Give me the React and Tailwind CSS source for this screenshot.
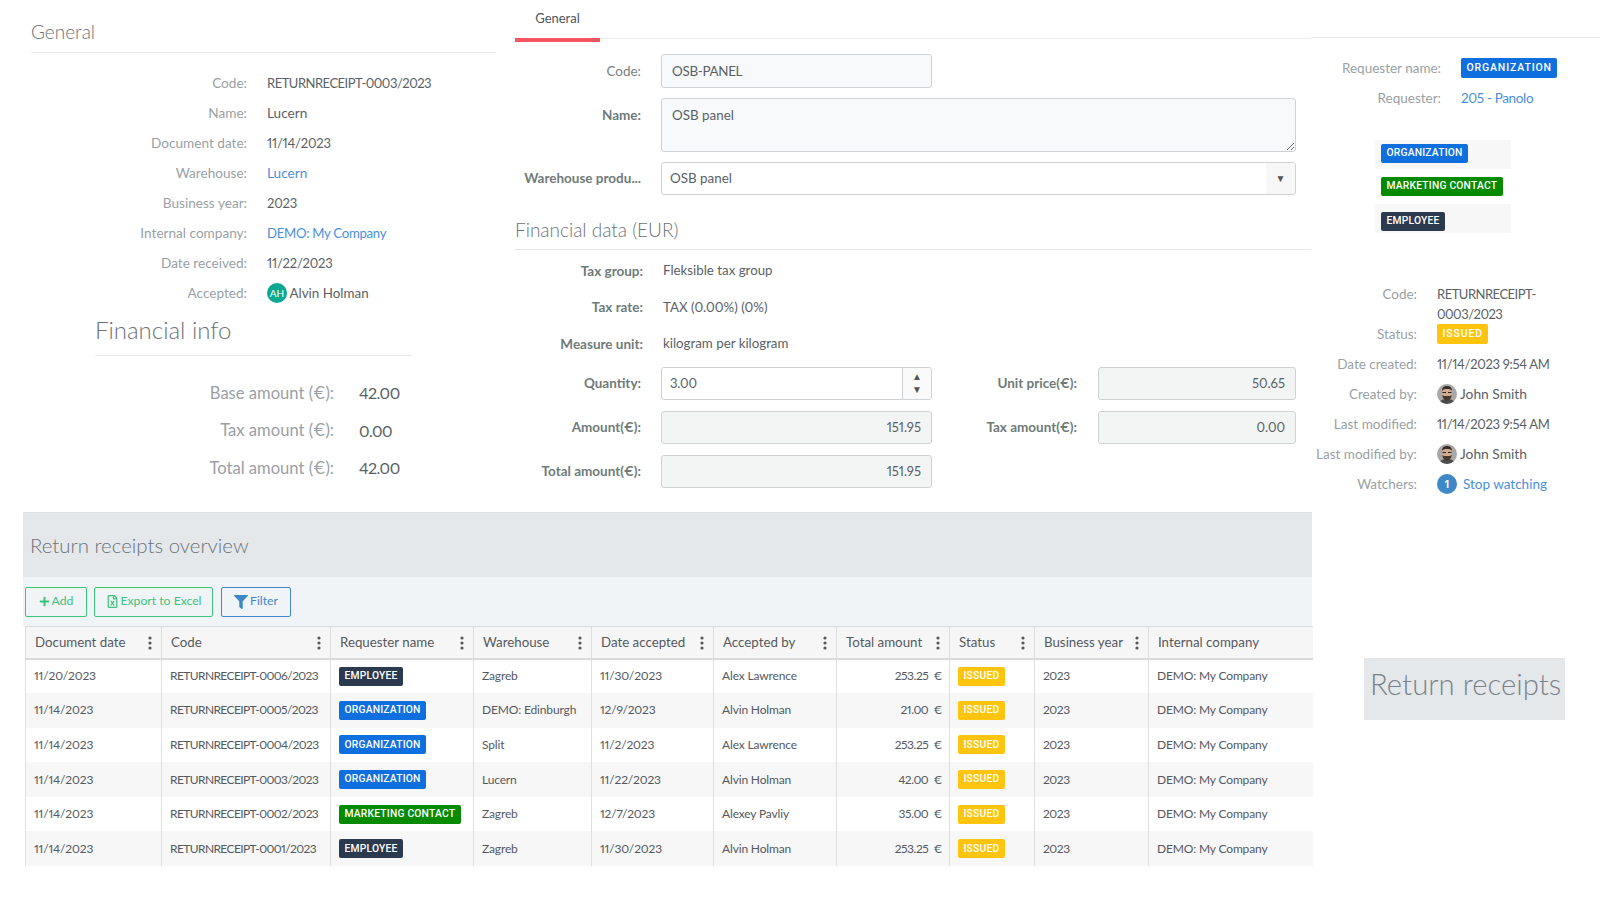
import React from 'react';
import { FaPlus, FaRegFileExcel, FaFilter } from 'react-icons/fa';

const N = 'text-[13px] tracking-[-0.2px]';
const D = 'text-[13px] tracking-[-0.3px]';
const C = 'text-[13px] tracking-[-0.5px]';

const Badge = ({ kind, big }) => {
  const map = {
    ORGANIZATION: 'bg-[#0f6fdf]',
    'MARKETING CONTACT': 'bg-[#058a00]',
    EMPLOYEE: 'bg-[#2b3a4e]',
    ISSUED: 'bg-[#ffc40d]',
  };
  return (
    <span className={`inline-flex items-center justify-center whitespace-nowrap rounded-[2px] px-[5.5px] font-['Roboto',sans-serif] font-medium text-white leading-none ${map[kind]} ${big ? 'h-[20px] text-[10.5px] tracking-[0.85px]' : 'h-[19px] text-[10.300px] tracking-[0.2px]'}`}>
      {kind}
    </span>
  );
};

const Face = () => (
  <svg viewBox="0 0 20 20" className="w-[20px] h-[20px] shrink-0 rounded-full">
    <rect width="20" height="20" fill="#a8a8a8" />
    <path d="M2 20c1-4 4-5 8-5s7 1 8 5z" fill="#4c4c4c" />
    <ellipse cx="10" cy="9.5" rx="5" ry="6" fill="#d0ab92" />
    <path d="M5 7c0-4 2.500-5 5-5s5 1 5 5c-1-1.500-2-2-5-2s-4 .5-5 2z" fill="#3a2d26" />
    <path d="M5.200 11c.5 3 2 5.500 4.800 5.500s4.300-2.500 4.800-5.500c-1 1-2.500 1-4.800 1s-3.800 0-4.800-1z" fill="#4a372c" />
    <path d="M5.500 8.500h3.500M11 8.500h3.500" stroke="#222" strokeWidth="1.100" />
  </svg>
);

const InfoRow = ({ label, children, labelW, h = 'h-[30px]' }) => (
  <div className={`flex items-center ${h}`}>
    <div className={`${labelW} text-right text-[#9a9fa5] shrink-0`}>{label}</div>
    <div className="text-[#5a5f66] ml-[20px] flex items-center">{children}</div>
  </div>
);

const link = 'text-[#4a8fdc]';

const Left = () => (
  <div className="w-[484px] ml-[31px] text-[13.600px] shrink-0">
    <div className="w-[465px] border-b border-[#e5e7e9] pt-[20px] pb-[8px] text-[19px] leading-[24px] font-light text-[#6b7278]">General</div>
    <div className="mt-[15.500px]">
      <InfoRow labelW="w-[216px]" label="Code:"><span className={C}>RETURNRECEIPT-0003/2023</span></InfoRow>
      <InfoRow labelW="w-[216px]" label="Name:">Lucern</InfoRow>
      <InfoRow labelW="w-[216px]" label="Document date:"><span className={N}>11/14/2023</span></InfoRow>
      <InfoRow labelW="w-[216px]" label="Warehouse:"><span className={link}>Lucern</span></InfoRow>
      <InfoRow labelW="w-[216px]" label="Business year:"><span className={N}>2023</span></InfoRow>
      <InfoRow labelW="w-[216px]" label="Internal company:"><span className={`${link} text-[13.200px] tracking-[-0.3px]`}>DEMO: My Company</span></InfoRow>
      <InfoRow labelW="w-[216px]" label="Date received:"><span className={N}>11/22/2023</span></InfoRow>
      <InfoRow labelW="w-[216px]" label="Accepted:">
        <span className="w-[20px] h-[20px] rounded-full bg-[#0aa98f] text-white text-[10px] flex items-center justify-center mr-[2.500px]">AH</span>
        <span className="text-[13.400px]">Alvin Holman</span>
      </InfoRow>
    </div>
    <div className="ml-[64px] w-[317px] mt-[5px] border-b border-[#e5e7e9] pb-[9px] text-[24px] leading-[32px] font-light text-[#6b7278]">Financial info</div>
    <div className="ml-[64px] mt-[19px] text-[16.600px]">
      {[['Base amount (€):', '42.00'], ['Tax amount (€):', '0.00'], ['Total amount (€):', '42.00']].map(([l, v]) => (
        <div key={l} className="flex items-center h-[37.500px]">
          <div className="w-[239px] text-right text-[#9a9fa5]">{l}</div>
          <div className="ml-[25px] text-[#5a5f66] text-[16px] tracking-[-0.5px]">{v}</div>
        </div>
      ))}
    </div>
  </div>
);

const Lbl = ({ children, w = 'w-[126px]' }) => (
  <div className={`${w} shrink-0 text-right font-bold text-[#6f7b79] truncate`}>{children}</div>
);

const inputBase = 'border border-[#cfd2d4] rounded-[3px] text-[#5a5f66] text-[13.400px] outline-none';

const ReadOnly = ({ value, w = 'w-[271px]' }) => (
  <input readOnly value={value} className={`${inputBase} ${w} h-[33.500px] bg-[#f3f5f5] text-right pr-[10px] text-[13px] tracking-[0px]`} />
);

const Middle = () => (
  <div className="w-[796px] text-[13.500px] shrink-0">
    <div className="h-[39px] border-b border-[#eceef0]">
      <div className="w-[85px] h-[42px] border-b-[4px] border-[#f4555f] text-center pt-[8px] leading-[20px] text-[13px] text-[#4f5459]">General</div>
    </div>
    <div className="mt-[15px] flex items-center gap-[20px]">
      <Lbl><span className="font-normal text-[#7a8280]">Code:</span></Lbl>
      <input readOnly value="OSB-PANEL" className={`${inputBase} w-[271px] h-[33.500px] bg-[#f8f9fb] px-[10px] tracking-[-0.3px]`} />
    </div>
    <div className="mt-[10px] flex gap-[20px]">
      <Lbl><span className="block mt-[7px]">Name:</span></Lbl>
      <textarea readOnly defaultValue="OSB panel" className={`${inputBase} w-[635px] h-[54px] bg-[#f8f9fb] px-[10px] py-[6px] block`} />
    </div>
    <div className="mt-[10px] flex items-center gap-[20px]">
      <Lbl>Warehouse produ...</Lbl>
      <div className={`${inputBase} w-[635px] h-[33px] flex items-center bg-white overflow-hidden`}>
        <span className="flex-1 pl-[8px]">OSB panel</span>
        <span className="w-[29px] h-full bg-[#f7f7f7] flex items-center justify-center text-[10px] text-[#555]">▼</span>
      </div>
    </div>
    <div className="mt-[23px] border-b border-[#e5e7e9] pb-[7px] text-[19px] leading-[24px] font-light text-[#6b7278]">Financial data (EUR)</div>
    <div className="mt-[3px]">
      {[['Tax group:', 'Fleksible tax group'], ['Tax rate:', 'TAX (0.00%) (0%)'], ['Measure unit:', 'kilogram per kilogram']].map(([l, v]) => (
        <div key={l} className="flex items-center h-[36.700px] gap-[20px]">
          <Lbl w="w-[128px]">{l}</Lbl>
          <span className="text-[#5a5f66] text-[13.300px]">{v}</span>
        </div>
      ))}
    </div>
    <div className="mt-[4px] flex flex-col gap-[10.500px]">
      <div className="flex items-center">
        <Lbl>Quantity:</Lbl>
        <div className={`${inputBase} ml-[20px] w-[271px] h-[33px] flex items-center bg-white overflow-hidden`}>
          <span className={`flex-1 pl-[8px] ${N}`}>3.00</span>
          <span className="w-[29px] h-full border-l border-[#cfd2d4] bg-[#fafafa] flex flex-col items-center justify-center text-[10px] leading-[13px] text-[#555]">
            <span>▲</span><span>▼</span>
          </span>
        </div>
        <Lbl w="w-[145px]">Unit price(€):</Lbl>
        <div className="ml-[21px]"><ReadOnly value="50.65" w="w-[198px]" /></div>
      </div>
      <div className="flex items-center">
        <Lbl>Amount(€):</Lbl>
        <div className="ml-[20px]"><ReadOnly value="151.95" /></div>
        <Lbl w="w-[145px]">Tax amount(€):</Lbl>
        <div className="ml-[21px]"><ReadOnly value="0.00" w="w-[198px]" /></div>
      </div>
      <div className="flex items-center">
        <Lbl>Total amount(€):</Lbl>
        <div className="ml-[20px]"><ReadOnly value="151.95" /></div>
      </div>
    </div>
  </div>
);

const Side = ({ label, children, cls = 'mb-[10px]' }) => (
  <div className={`flex ${cls}`}>
    <div className="w-[106px] text-right text-[#9a9fa5] leading-[20px] shrink-0 whitespace-nowrap">{label}</div>
    <div className="ml-[20px] text-[#5a5f66] leading-[20px] flex items-center">{children}</div>
  </div>
);

const Right = () => (
  <div className="flex-1 mt-[37px] border-t border-[#e5e7e9] text-[13.500px]">
    <div className="pt-[15px]">
      <InfoRow labelW="w-[130px]" label="Requester name:"><Badge kind="ORGANIZATION" big /></InfoRow>
      <InfoRow labelW="w-[130px]" label="Requester:"><span className={`${link} tracking-[-0.35px]`}>205 - Panolo</span></InfoRow>
    </div>
    <div className="ml-[64px] w-[136px] mt-[27px]">
      <div className="h-[29px] bg-[#f7f7f7] pl-[6px] pt-[4px] flex items-start"><Badge kind="ORGANIZATION" /></div>
      <div className="h-[35px] pl-[6px] flex items-center"><Badge kind="MARKETING CONTACT" /></div>
      <div className="h-[29px] bg-[#f7f7f7] pl-[6px] pt-[8px] flex items-start"><Badge kind="EMPLOYEE" /></div>
    </div>
    <div className="mt-[51px]">
      <Side label="Code:" cls="mb-0"><span className={C}>RETURNRECEIPT-<br />0003/2023</span></Side>
      <Side label="Status:"><Badge kind="ISSUED" big /></Side>
      <Side label="Date created:"><span className={D}>11/14/2023 9:54 AM</span></Side>
      <Side label="Created by:"><Face /><span className="ml-[3px] text-[13.800px]">John Smith</span></Side>
      <Side label="Last modified:"><span className={D}>11/14/2023 9:54 AM</span></Side>
      <Side label="Last modified by:"><Face /><span className="ml-[3px] text-[13.800px]">John Smith</span></Side>
      <Side label="Watchers:">
        <span className="w-[20px] h-[20px] rounded-full bg-[#3f88c8] text-white text-[12px] font-bold flex items-center justify-center mr-[6px]">1</span>
        <span className={link}>Stop watching</span>
      </Side>
    </div>
  </div>
);

const Kebab = () => (
  <svg viewBox="0 0 4 14" className="w-[4px] h-[14px] shrink-0 mr-[9px]" fill="#55595e">
    <circle cx="2" cy="2" r="1.600" /><circle cx="2" cy="7" r="1.600" /><circle cx="2" cy="12" r="1.600" />
  </svg>
);

const cols = [
  ['Document date', 'w-[136px]'], ['Code', 'w-[169px]'], ['Requester name', 'w-[143px]'], ['Warehouse', 'w-[118px]'], ['Date accepted', 'w-[122px]'],
  ['Accepted by', 'w-[123px]'], ['Total amount', 'w-[113px]'], ['Status', 'w-[85px]'], ['Business year', 'w-[114px]'], ['Internal company', 'w-[164px]'],
];

const rows = [
  ['11/20/2023', 'RETURNRECEIPT-0006/2023', 'EMPLOYEE', 'Zagreb', '11/30/2023', 'Alex Lawrence', '253.25'],
  ['11/14/2023', 'RETURNRECEIPT-0005/2023', 'ORGANIZATION', 'DEMO: Edinburgh', '12/9/2023', 'Alvin Holman', '21.00'],
  ['11/14/2023', 'RETURNRECEIPT-0004/2023', 'ORGANIZATION', 'Split', '11/2/2023', 'Alex Lawrence', '253.25'],
  ['11/14/2023', 'RETURNRECEIPT-0003/2023', 'ORGANIZATION', 'Lucern', '11/22/2023', 'Alvin Holman', '42.00'],
  ['11/14/2023', 'RETURNRECEIPT-0002/2023', 'MARKETING CONTACT', 'Zagreb', '12/7/2023', 'Alexey Pavliy', '35.00'],
  ['11/14/2023', 'RETURNRECEIPT-0001/2023', 'EMPLOYEE', 'Zagreb', '11/30/2023', 'Alvin Holman', '253.25'],
];

const td = 'pl-[8px] border-r border-[#dddfe1] whitespace-nowrap';
const tn = 'tracking-[-0.15px]';
const ty = 'tracking-[-0.45px]';
const tc = 'tracking-[-0.6px]';
const tt = 'tracking-[-0.15px]';

const Overview = () => (
  <div className="w-[1289px] ml-[23px] shrink-0">
    <div className="h-[65px] bg-[#e5e8eb] border-t border-[#dfe2e5] flex items-center pl-[7px] text-[20.400px] font-light text-[#6b7278]">Return receipts overview</div>
    <div className="h-[49px] bg-[#f1f4f7] flex items-center pl-[2px] gap-[7px] text-[12.200px]">
      <button className="h-[30px] w-[62px] border border-[#3cc47c] rounded-[2px] text-[#3cc47c] flex items-center justify-center gap-[2px]"><FaPlus className="text-[11px]" />Add</button>
      <button className="h-[30px] w-[119px] border border-[#3cc47c] rounded-[2px] text-[#3cc47c] flex items-center justify-center gap-[2px]"><FaRegFileExcel className="text-[13px]" />Export to Excel</button>
      <button className="h-[30px] w-[70px] ml-[1px] border border-[#3f88c8] rounded-[2px] text-[#3f88c8] flex items-center justify-center gap-[2px]"><FaFilter className="text-[14px]" />Filter</button>
    </div>
    <table className="ml-[2px] w-[1287px] table-fixed border-collapse text-[12px] text-[#55595e] bg-white">
      <colgroup>{cols.map(([n, w]) => <col key={n} className={w} />)}</colgroup>
      <thead>
        <tr className="h-[32px] bg-[#f6f6f6] border-t border-b-2 border-[#d9dbdd] border-l">
          {cols.map(([n], i) => (
            <th key={n} className="font-normal text-left border-r border-[#dddfe1] last:border-r-0 pl-[9px] pt-[1px] text-[13.300px]">
              <div className="flex items-center justify-between whitespace-nowrap">
                <span>{n}</span>{i < 9 && <Kebab />}
              </div>
            </th>
          ))}
        </tr>
      </thead>
      <tbody>
        {rows.map((r, i) => (
          <tr key={r[1]} className={`h-[34.600px] border-l border-[#dddfe1] ${i % 2 ? 'bg-[#f7f7f7]' : 'bg-white'}`}>
            <td className={`${td} ${tn}`}>{r[0]}</td>
            <td className={`${td} ${tc}`}>{r[1]}</td>
            <td className={`${td} pl-[6px]`}><div className="flex"><Badge kind={r[2]} /></div></td>
            <td className={`${td} ${tt}`}>{r[3]}</td>
            <td className={`${td} ${tn}`}>{r[4]}</td>
            <td className={`${td} ${tt}`}>{r[5]}</td>
            <td className={`${td} text-right pr-[7px] ${ty}`}>{r[6]}{'\u00a0\u00a0'}€</td>
            <td className={`${td} pl-[6px]`}><div className="flex"><Badge kind="ISSUED" /></div></td>
            <td className={`${td} ${ty}`}>2023</td>
            <td className={`pl-[8px] whitespace-nowrap ${tt}`}>DEMO: My Company</td>
          </tr>
        ))}
      </tbody>
    </table>
  </div>
);

export default function App() {
  return (
    <div className="w-[1600px] h-[900px] bg-white overflow-hidden font-['Lato',sans-serif] proportional-nums">
      <div className="flex h-[512px]">
        <Left />
        <Middle />
        <Right />
      </div>
      <div className="flex">
        <Overview />
        <div className="ml-[52px] mt-[146px] w-[201px] h-[62px] bg-[#e5e8eb] flex items-center pl-[6px] pb-[10px] text-[29.300px] font-light text-[#7a8389] whitespace-nowrap">Return receipts</div>
      </div>
    </div>
  );
}
